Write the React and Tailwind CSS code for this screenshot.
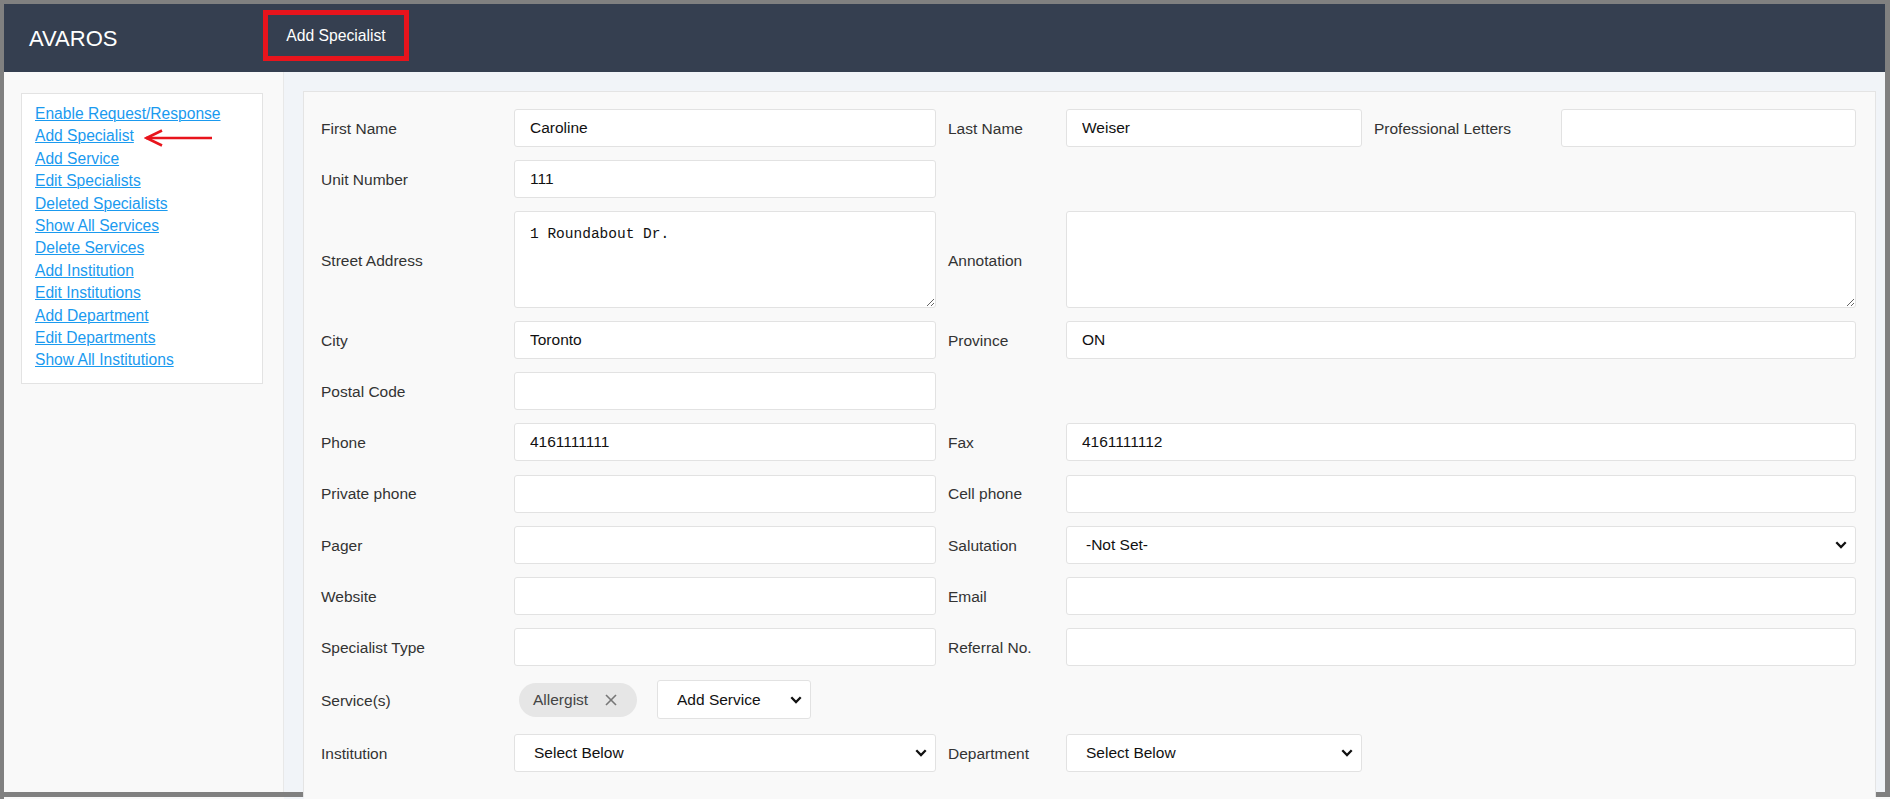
import React from "react";

const links = [
  "Enable Request/Response",
  "Add Specialist",
  "Add Service",
  "Edit Specialists",
  "Deleted Specialists",
  "Show All Services",
  "Delete Services",
  "Add Institution",
  "Edit Institutions",
  "Add Department",
  "Edit Departments",
  "Show All Institutions",
];

const font = { fontFamily: '"Liberation Sans", Arial, sans-serif' };

function Chevron() {
  return (
    <svg width="12" height="8" viewBox="0 0 12 8" className="pointer-events-none absolute right-[9px] top-1/2 -translate-y-1/2">
      <polyline points="1.3,1.3 6,6 10.7,1.3" fill="none" stroke="#111" strokeWidth="2.3" />
    </svg>
  );
}

function Label({ children, second }) {
  return (
    <div className={`pt-[1px] text-[15.5px] text-[#333] ${second ? "pl-[12px]" : ""}`}>{children}</div>
  );
}

function Input({ value = "", span = "" }) {
  return (
    <input
      readOnly
      value={value}
      className={`h-[38px] w-full rounded-[3px] border border-[#e2e2e2] bg-white px-[15px] text-[15.5px] text-[#111] outline-none ${span}`}
      style={font}
    />
  );
}

function Select({ value, span = "", w = "w-full" }) {
  return (
    <div className={`relative h-[38px] ${w} ${span}`}>
      <select
        className="h-full w-full appearance-none rounded-[3px] border border-[#e2e2e2] bg-white pl-[19px] pr-[30px] text-[15.5px] text-[#111] outline-none"
        style={font}
        defaultValue={value}
      >
        <option>{value}</option>
      </select>
      <Chevron />
    </div>
  );
}

function Textarea({ value = "", span = "" }) {
  return (
    <textarea
      readOnly
      value={value}
      className={`h-[97px] w-full rounded-[3px] border border-[#e2e2e2] bg-white px-[15px] pt-[12px] text-[14.5px] text-[#111] outline-none ${span}`}
      style={{ fontFamily: '"Liberation Mono", "DejaVu Sans Mono", monospace' }}
    />
  );
}

export default function App() {
  return (
    <div className="h-[799px] w-[1890px] overflow-hidden bg-[#f9f9f9]" style={font}>
      <div className="flex h-[797px] flex-col border-t-4 border-l-4 border-r-[5px] border-b-[5px] border-solid border-[#808080]">
        {/* Header */}
        <div className="flex h-[68px] shrink-0 items-start bg-[#353f50]">
          <div className="flex h-full w-[259px] items-center pl-[25px] text-[22px] text-white">AVAROS</div>
          <div className="mt-[6px] flex h-[51px] w-[146px] items-center justify-center border-[5px] border-solid border-[#e8141c] text-[15.7px] text-white">
            Add Specialist
          </div>
        </div>
        {/* Body */}
        <div className="flex min-h-0 flex-1">
          {/* Sidebar */}
          <div className="w-[280px] shrink-0 border-r border-[#e8e8e8] bg-[#f9f9f9] pl-[17px] pt-[21px]">
            <div className="relative w-[242px] border border-[#e3e3e3] bg-white pb-[11px] pl-[13px] pt-[9px]">
              {links.map((l) => (
                <div key={l} className="text-[15.6px] leading-[22.4px]">
                  <a href="#" className="text-[#1a9aef] underline decoration-1">
                    {l}
                  </a>
                </div>
              ))}
              <svg width="70" height="18" viewBox="0 0 70 18" className="absolute left-[122px] top-[35px]">
                <line x1="2" y1="9" x2="68" y2="9" stroke="#e8141c" strokeWidth="2.5" />
                <polyline points="18,1.5 2.5,9 18,16.5" fill="none" stroke="#e8141c" strokeWidth="2.5" />
              </svg>
            </div>
          </div>
          {/* Main */}
          <div className="min-w-0 flex-1 bg-[#f1f4f8] pl-[19px] pr-[9px] pt-[19px]">
            <div className="h-[760px] border border-[#e4e4e4] bg-[#f9f9f9] pl-[17px] pr-[18px] pt-[17px]">
              <div className="grid grid-cols-[193px_422px_130px_296px_199px_295px] items-center gap-y-[13.1px]">
                <Label>First Name</Label>
                <Input value="Caroline" />
                <Label second>Last Name</Label>
                <Input value="Weiser" />
                <Label second>Professional Letters</Label>
                <Input />

                <Label>Unit Number</Label>
                <Input value="111" />
                <div className="col-span-4" />

                <Label>Street Address</Label>
                <Textarea value="1 Roundabout Dr." />
                <Label second>Annotation</Label>
                <Textarea span="col-span-3" />

                <Label>City</Label>
                <Input value="Toronto" />
                <Label second>Province</Label>
                <Input value="ON" span="col-span-3" />

                <Label>Postal Code</Label>
                <Input />
                <div className="col-span-4" />

                <Label>Phone</Label>
                <Input value="4161111111" />
                <Label second>Fax</Label>
                <Input value="4161111112" span="col-span-3" />

                <Label>Private phone</Label>
                <Input />
                <Label second>Cell phone</Label>
                <Input span="col-span-3" />

                <Label>Pager</Label>
                <Input />
                <Label second>Salutation</Label>
                <Select value="-Not Set-" span="col-span-3" />

                <Label>Website</Label>
                <Input />
                <Label second>Email</Label>
                <Input span="col-span-3" />

                <Label>Specialist Type</Label>
                <Input />
                <Label second>Referral No.</Label>
                <Input span="col-span-3" />

                <Label>Service(s)</Label>
                <div className="col-span-5 flex h-[42px] items-center">
                  <div className="ml-[5px] flex h-[34px] w-[118px] items-center rounded-full bg-[#e6e6e6] pl-[14px] text-[15.5px] text-[#444]">
                    <span>Allergist</span>
                    <svg width="12" height="12" viewBox="0 0 12 12" className="ml-[17px]">
                      <line x1="1" y1="1" x2="11" y2="11" stroke="#777" strokeWidth="1.6" />
                      <line x1="11" y1="1" x2="1" y2="11" stroke="#777" strokeWidth="1.6" />
                    </svg>
                  </div>
                  <div className="ml-[20px]">
                    <Select value="Add Service" w="w-[154px] h-[39px]" />
                  </div>
                </div>

                <Label>Institution</Label>
                <Select value="Select Below" />
                <Label second>Department</Label>
                <Select value="Select Below" />
                <div className="col-span-2" />
              </div>
            </div>
          </div>
        </div>
      </div>
      <div className="flex h-[2px]">
        <div className="w-[4px] bg-[#808080]" />
        <div className="w-[280px] bg-[#f9f9f9]" />
        <div className="w-[20px] bg-[#f1f4f8]" />
        <div className="flex-1 bg-[#f9f9f9]" />
      </div>
    </div>
  );
}
